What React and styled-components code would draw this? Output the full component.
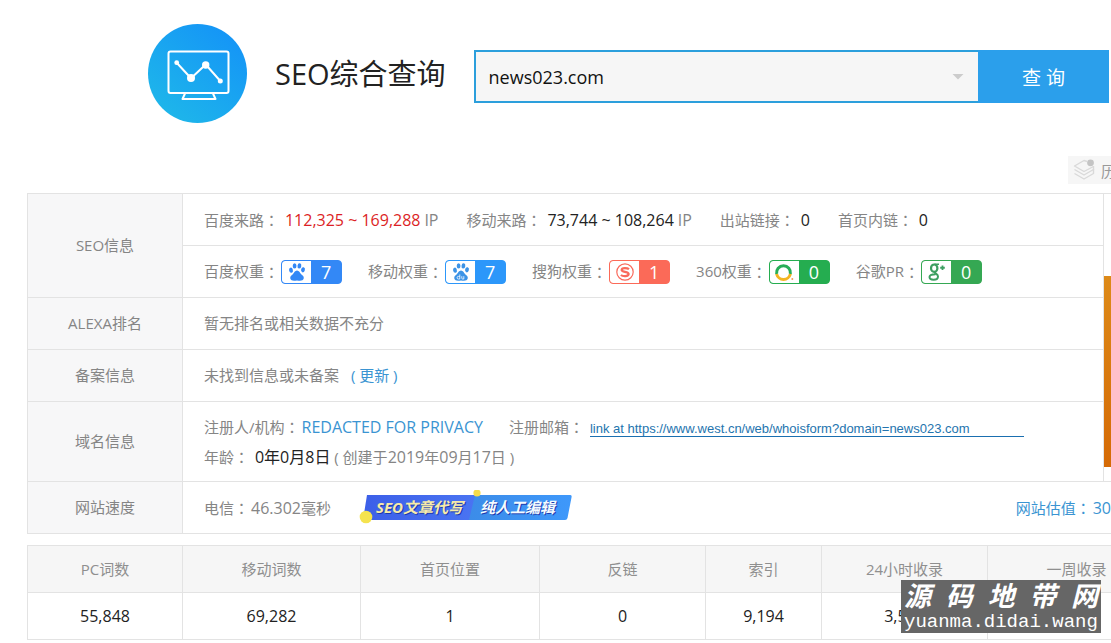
import styled, { createGlobalStyle } from "styled-components";

export default function App() {
    return (
        <>
            <GlobalStyle />
            <Page>
                <Header>
                    <Logo />
                    <Title>SEO综合查询</Title>
                    <Search onSubmit={(e) => e.preventDefault()}>
                        <SearchField>
                            <SearchInput aria-label="域名" defaultValue="news023.com" />
                            <Caret type="button" aria-label="展开" />
                        </SearchField>
                        <SearchButton type="submit">查 询</SearchButton>
                    </Search>
                </Header>

                <Toolbar>
                    <HistoryButton type="button">
                        <LayersIcon />
                        历史
                    </HistoryButton>
                </Toolbar>

                <InfoTable>
                    <colgroup>
                        <LabelCol />
                        <col />
                        <AdCol />
                    </colgroup>
                    <tbody>
                        <tr>
                            <LabelCell scope="row" rowSpan="2">SEO信息</LabelCell>
                            <InfoCell>
                                <Items $gap={28}>
                                    <span>百度来路<Colon>：</Colon> <Num $color="#dc1f26">112,325 ~ 169,288</Num> <Latin>IP</Latin></span>
                                    <span>移动来路<Colon>：</Colon> <Num>73,744 ~ 108,264</Num> <Latin>IP</Latin></span>
                                    <span>出站链接<Colon>：</Colon> <Num>0</Num></span>
                                    <span>首页内链<Colon>：</Colon> <Num>0</Num></span>
                                </Items>
                            </InfoCell>
                            <AdCell rowSpan="5">
                                <Ad />
                            </AdCell>
                        </tr>
                        <tr>
                            <InfoCell>
                                <Items $gap={26}>
                                    {ranks.map((rank) => (
                                        <Rank key={rank.name}>
                                            {rank.name}<Colon>：</Colon>
                                            <Badge $color={rank.color}>
                                                <BadgeIcon>{rank.icon}</BadgeIcon>
                                                <BadgeValue>{rank.value}</BadgeValue>
                                            </Badge>
                                        </Rank>
                                    ))}
                                </Items>
                            </InfoCell>
                        </tr>
                        <tr>
                            <LabelCell scope="row">ALEXA排名</LabelCell>
                            <InfoCell>暂无排名或相关数据不充分</InfoCell>
                        </tr>
                        <tr>
                            <LabelCell scope="row">备案信息</LabelCell>
                            <InfoCell>
                                未找到信息或未备案 <UpdateLink href="#update">( 更新 )</UpdateLink>
                            </InfoCell>
                        </tr>
                        <tr>
                            <LabelCell scope="row">域名信息</LabelCell>
                            <InfoCell $tall>
                                <Items $gap={26}>
                                    <span>注册人/机构<Colon>：</Colon><Link href="#owner"><Latin>REDACTED FOR PRIVACY</Latin></Link></span>
                                    <span>
                                        注册邮箱<Colon>：</Colon>{" "}
                                        <MailLink href="#mail">link at https://www.west.cn/web/whoisform?domain=news023.com</MailLink>
                                    </span>
                                </Items>
                                <div>
                                    年龄<Colon>：</Colon> <Num>0年0月8日</Num>
                                    {" "}( 创建于<Latin>2019</Latin>年<Latin>09</Latin>月<Latin>17</Latin>日 )
                                </div>
                            </InfoCell>
                        </tr>
                        <tr>
                            <LabelCell scope="row">网站速度</LabelCell>
                            <InfoCell colSpan="2" $flush>
                                <SpeedRow>
                                    <span>电信<Colon>：</Colon><Latin>46.302</Latin>毫秒</span>
                                    <Promo />
                                    <ValueLink href="#value">网站估值<Colon>：</Colon><Latin>30</Latin></ValueLink>
                                </SpeedRow>
                            </InfoCell>
                        </tr>
                    </tbody>
                </InfoTable>

                <StatsBox>
                    <StatsTable>
                        <colgroup>
                            {stats.map((s) => (
                                <StatCol key={s.name} $width={s.width} />
                            ))}
                        </colgroup>
                        <thead>
                            <tr>
                                {stats.map((s) => (
                                    <StatHead key={s.name} scope="col">{s.name}</StatHead>
                                ))}
                            </tr>
                        </thead>
                        <tbody>
                            <tr>
                                {stats.map((s) => (
                                    <StatCell key={s.name}>{s.value}</StatCell>
                                ))}
                            </tr>
                        </tbody>
                    </StatsTable>
                    <Watermark>
                        <WatermarkName>
                            {"源码地带网".split("").map((c) => (
                                <span key={c}>{c}</span>
                            ))}
                        </WatermarkName>
                        <WatermarkUrl>yuanma.didai.wang</WatermarkUrl>
                    </Watermark>
                </StatsBox>
            </Page>
        </>
    );
}

function Logo() {
    return (
        <svg width="99" height="99" viewBox="0 0 99 99" aria-hidden="true">
            <defs>
                <linearGradient id="logo" x1="0.15" y1="0.9" x2="0.8" y2="0.1">
                    <stop offset="0" stopColor="#1eb6ea" />
                    <stop offset="1" stopColor="#1596f6" />
                </linearGradient>
            </defs>
            <circle cx="49.5" cy="49.5" r="49.5" fill="url(#logo)" />
            <g fill="none" stroke="#fff" strokeWidth="2" strokeLinejoin="round">
                <rect x="20.5" y="27.5" width="60" height="41.5" rx="2" />
                <path d="M37 69.5L34.5 75H67.5L65 69.5" />
                <path d="M28.7 38.7L43 54.3L57.7 40.5L72.3 57" />
            </g>
            <g fill="#fff">
                <circle cx="28.7" cy="38.7" r="2.4" />
                <circle cx="43" cy="54" r="4" />
                <circle cx="57.7" cy="41" r="3.7" />
                <circle cx="72.3" cy="57" r="2.5" />
            </g>
        </svg>
    );
}

function LayersIcon() {
    return (
        <svg width="22" height="22" viewBox="0 0 22 22" fill="none" stroke="#d9d9d9" strokeWidth="1.4" strokeLinejoin="round" aria-hidden="true">
            <path d="M14 2.5L11 1.5L1.5 7L11 12.5L20.5 7.5" />
            <path d="M1.5 10.5L11 16L20.5 10.5V7" />
            <path d="M1.5 14.5L11 20L20.5 14.5V10" />
            <circle cx="17.5" cy="3.8" r="3.4" fill="#c4c4c4" stroke="none" />
        </svg>
    );
}

function Paw({ color, mark }) {
    return (
        <svg width="18" height="20" viewBox="0 0 18 20" fill={color} aria-hidden="true">
            <ellipse cx="3" cy="8.2" rx="1.9" ry="2.6" transform="rotate(-14 3 8.2)" />
            <ellipse cx="6.6" cy="3.9" rx="1.9" ry="2.7" />
            <ellipse cx="11.4" cy="3.9" rx="1.9" ry="2.7" transform="rotate(8 11.4 3.9)" />
            <ellipse cx="15" cy="7.8" rx="1.9" ry="2.6" transform="rotate(14 15 7.8)" />
            <path d="M9 8.6C11.3 8.6 11.7 10.9 13.2 12.2C14.7 13.4 16.2 14.4 15.7 16.6C15.1 19.2 12.3 18.9 9 18.6C5.7 18.9 2.9 19.2 2.3 16.6C1.8 14.4 3.3 13.4 4.8 12.2C6.3 10.9 6.7 8.6 9 8.6Z" />
            {mark && <path d="M7.8 12.5V17H6.4A1.2 1.2 0 0 1 6.400 14.400H7.800M9.800 14.200V16.200Q9.800 17 10.600 17H11.800V14.200" fill="none" stroke="#fff" strokeWidth="0.8" />}
        </svg>
    );
}

function Sogou() {
    return (
        <svg width="20" height="20" viewBox="0 0 20 20" fill="none" stroke="#f96a5c" aria-hidden="true">
            <circle cx="10" cy="10" r="8.2" strokeWidth="1.2" />
            <path d="M14 7.1C12.4 5.9 6.7 5.3 6.7 7.9C6.7 10.5 13.6 9.1 13.6 12.1C13.6 14.8 7.6 14.5 5.9 13" strokeWidth="2.3" />
        </svg>
    );
}

function Ring() {
    return (
        <svg width="20" height="20" viewBox="0 0 20 20" fill="none" strokeWidth="3" aria-hidden="true">
            <path d="M2.6 12A7 7 0 1 1 16.4 12" stroke="#27ae57" />
            <path d="M2.6 12A7.100 7.100 0 0 0 16.4 12" stroke="#f3b521" />
            <circle cx="18.3" cy="17" r="1" fill="#f09a59" />
        </svg>
    );
}

function GooglePlus() {
    return (
        <svg width="20" height="20" viewBox="0 0 20 20" fill="none" stroke="#3d9f61" aria-hidden="true">
            <ellipse cx="7.2" cy="6.2" rx="3.2" ry="3.7" strokeWidth="2.2" />
            <path d="M7.5 2.3H12" strokeWidth="1.4" />
            <path d="M7.5 9.8C7.5 11.5 11 11.8 11 14.5C11 16.8 8.9 17.7 6.6 17.7C4.3 17.7 2.5 16.8 2.5 15C2.5 13 5 12.2 8.5 12.2" strokeWidth="2" />
            <path d="M15.5 3.500V8M13.200 5.750H17.800" strokeWidth="1.8" />
        </svg>
    );
}

function Promo() {
    return (
        <PromoLink href="#promo">
            <svg width="214" height="36" viewBox="0 1 214 36">
                <defs>
                    <linearGradient id="promoLeft">
                        <stop offset="0" stopColor="#3c5fe8" />
                        <stop offset="1" stopColor="#4a74f2" />
                    </linearGradient>
                    <linearGradient id="promoRight">
                        <stop offset="0" stopColor="#3c8ce8" />
                        <stop offset="1" stopColor="#3e98fb" />
                    </linearGradient>
                </defs>
                <path d="M8 6H118L112 31H4Z" fill="url(#promoLeft)" />
                <path d="M116 6H211Q213 6 212.600 8L208.500 29Q208 31 206 31H110Z" fill="url(#promoRight)" />
                <circle cx="7" cy="28" r="6.300" fill="#f5e34f" />
                <circle cx="118" cy="4" r="3.600" fill="#f5dc4a" />
                <g fill="#1d3bae" aria-hidden="true">
                    <PromoText x="18" y="25">SEO文章代写</PromoText>
                    <PromoText x="122" y="25">纯人工编辑</PromoText>
                </g>
                <PromoText x="17" y="24" fill="#f6ebaa">SEO文章代写</PromoText>
                <PromoText x="121" y="24" fill="#f4fbff">纯人工编辑</PromoText>
            </svg>
        </PromoLink>
    );
}

const ranks = [
    { name: "百度权重", value: 7, color: "#3388f6", icon: <Paw color="#3388f6" /> },
    { name: "移动权重", value: 7, color: "#2c97fa", icon: <Paw color="#3c93e6" mark /> },
    { name: "搜狗权重", value: 1, color: "#fb6a58", icon: <Sogou /> },
    { name: "360权重", value: 0, color: "#25ad50", icon: <Ring /> },
    { name: "谷歌PR", value: 0, color: "#35a853", icon: <GooglePlus /> },
];

const stats = [
    { name: "PC词数", value: "55,848", width: 155 },
    { name: "移动词数", value: "69,282", width: 178 },
    { name: "首页位置", value: "1", width: 179 },
    { name: "反链", value: "0", width: 166 },
    { name: "索引", value: "9,194", width: 116 },
    { name: "24小时收录", value: "3,510", width: 166 },
    { name: "一周收录", value: "", width: 178 },
];

const GlobalStyle = createGlobalStyle`
    * {
        box-sizing: border-box;
    }
    body {
        margin: 0;
        background: #fff;
        color: #858585;
        font-family: "Open Sans", "Noto Sans CJK SC", sans-serif;
        font-size: 15px;
        line-height: 29px;
    }
    button, input {
        font-family: inherit;
    }
`
const Page = styled.div`
    padding: 24px 0 3px 27px;
    overflow: hidden;
`
const Header = styled.header`
    display: flex;
    align-items: center;
    gap: 28px;
    padding: 0 2px 0 121px;
`
const Title = styled.h1`
    margin: 0;
    font-size: 29px;
    font-weight: 400;
    line-height: 40px;
    color: #222;
    white-space: nowrap;
`
const Search = styled.form`
    display: flex;
    flex: 1;
    height: 53px;
    margin-top: 6px;
`
const SearchField = styled.div`
    display: flex;
    flex: 1;
    align-items: center;
    padding-right: 14px;
    background: #f6f6f6;
    border: 2px solid #2c9fdc;
    border-right: none;
`
const SearchInput = styled.input`
    flex: 1;
    min-width: 0;
    padding: 0 13px;
    border: none;
    outline: none;
    background: none;
    font-size: 18px;
    color: #111;
`
const Caret = styled.button`
    width: 12px;
    height: 6px;
    padding: 0;
    border: none;
    background: #ccc;
    clip-path: polygon(0 0, 100% 0, 50% 100%);
`
const SearchButton = styled.button`
    width: 131px;
    border: none;
    background: #2b9feb;
    color: #fff;
    font-size: 19px;
`
const Toolbar = styled.div`
    display: flex;
    justify-content: flex-end;
    margin: 33px 0 9px;
`
const HistoryButton = styled.button`
    display: flex;
    align-items: center;
    gap: 6px;
    width: 43px;
    height: 28px;
    padding: 0 0 0 5px;
    overflow: hidden;
    border: none;
    background: #f6f6f6;
    color: #999;
    font-size: 15px;
    white-space: nowrap;
    svg {
        flex: none;
    }
`
const InfoTable = styled.table`
    width: 100%;
    table-layout: fixed;
    border-collapse: collapse;
    border: 1px solid #e3e3e3;
    border-right: none;
`
const LabelCol = styled.col`
    width: 155px;
`
const AdCol = styled.col`
    width: 8px;
`
const LabelCell = styled.th`
    padding: 0;
    border: 1px solid #e3e3e3;
    background: #f7f7f8;
    font-weight: 400;
    text-align: center;
`
const InfoCell = styled.td`
    height: ${(props) => (props.$tall ? "80px" : "52px")};
    padding: 0 0 0 21px;
    border: 1px solid #e3e3e3;
    border-right: ${(props) => (props.$flush ? "none" : "1px solid #e3e3e3")};
    white-space: nowrap;
`
const AdCell = styled.td`
    padding: 0 0 14px;
    border-bottom: 1px solid #e3e3e3;
    vertical-align: bottom;
`
const Ad = styled.div`
    height: 191px;
    background: linear-gradient(#dd8a18, #d56a05);
`
const Items = styled.div`
    display: flex;
    align-items: center;
    gap: ${(props) => props.$gap}px;
`
const Latin = styled.span`
    font-size: 16px;
`
const Num = styled(Latin)`
    color: ${(props) => props.$color || "#222"};
`
const Colon = styled.span`
    margin-right: 2px;
    font-family: "Noto Sans CJK TC", sans-serif;
`
const Link = styled.a`
    color: #3a94d2;
    text-decoration: none;
`
const UpdateLink = styled(Link)`
    margin-left: 8px;
`
const ValueLink = styled(Link)`
    margin-left: auto;
`
const MailLink = styled.a`
    display: inline-block;
    padding-right: 54px;
    border-bottom: 1px solid #1a6fb0;
    color: #2474ae;
    font-family: "Liberation Sans", sans-serif;
    font-size: 13px;
    line-height: 14px;
    text-decoration: none;
`
const Rank = styled.div`
    display: flex;
    align-items: center;
`
const Badge = styled.span`
    display: flex;
    width: 61px;
    height: 24px;
    overflow: hidden;
    border: 1px solid ${(props) => props.$color};
    border-radius: 4px;
    background: ${(props) => props.$color};
`
const BadgeIcon = styled.span`
    display: flex;
    flex: 1;
    align-items: center;
    justify-content: center;
    background: #fff;
    border-radius: 3px 0 0 3px;
`
const BadgeValue = styled.span`
    width: 30px;
    color: #fff;
    font-size: 18px;
    line-height: 22px;
    text-align: center;
`
const SpeedRow = styled.div`
    display: flex;
    align-items: center;
`
const PromoLink = styled.a`
    display: flex;
    margin-left: 28px;
`
const PromoText = styled.text`
    font-size: 15px;
    font-weight: 700;
    font-style: italic;
`
const StatsBox = styled.div`
    position: relative;
    margin-top: 11px;
`
const StatsTable = styled.table`
    width: 1138px;
    table-layout: fixed;
    border-collapse: collapse;
`
const StatCol = styled.col`
    width: ${(props) => props.$width}px;
`
const StatHead = styled.th`
    height: 47px;
    padding: 0;
    border: 1px solid #e3e3e3;
    background: #f6f6f6;
    color: #8f8f8f;
    font-weight: 400;
`
const StatCell = styled.td`
    height: 47px;
    padding: 0;
    border: 1px solid #e3e3e3;
    color: #222;
    font-size: 16px;
    text-align: center;
`
const Watermark = styled.div`
    position: absolute;
    right: 10px;
    bottom: 7px;
    width: 200px;
    padding: 0 3px;
    background: #666;
    color: #fff;
`
const WatermarkName = styled.div`
    display: flex;
    justify-content: space-between;
    font-size: 27px;
    font-weight: 700;
    font-style: italic;
    line-height: 31px;
`
const WatermarkUrl = styled.div`
    font-family: "Liberation Mono", monospace;
    font-size: 19px;
    line-height: 22px;
`
